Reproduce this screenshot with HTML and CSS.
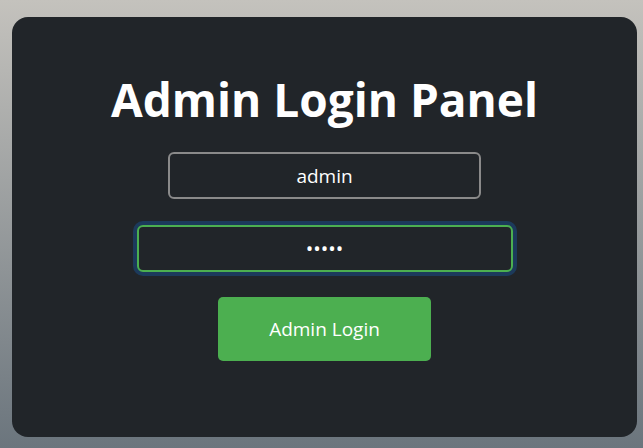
FILE: index.html
```html
<!DOCTYPE html>
<html>
<head>
<meta charset="utf-8">
<link rel="stylesheet" href="styles.css">
</head>
<body>
<div class="card">
  <h1 class="title">Admin Login Panel</h1>
  <input class="field field-user" type="text" value="admin">
  <input class="field field-pass" type="password" value="admin">
  <button class="btn">Admin Login</button>
</div>
</body>
</html>
```
FILE: styles.css
```css
html, body {
  margin: 0;
  height: 100%;
}
body {
  background: linear-gradient(to bottom, #c4c2bd 0%, #6b757d 100%);
  font-family: "Open Sans", "Noto Sans", sans-serif;
  padding: 17px 0 0 12px;
  box-sizing: border-box;
}
.card {
  width: 625px;
  height: 420px;
  background: #212529;
  border-radius: 16px;
  display: flex;
  flex-direction: column;
  align-items: center;
  padding-top: 54px;
  box-sizing: border-box;
}
.title {
  margin: 0 0 25px;
  color: #fff;
  font-size: 46px;
  line-height: 56px;
  font-weight: 700;
}
.field {
  box-sizing: border-box;
  height: 47px;
  background: #212529;
  color: #fff;
  text-align: center;
  font-family: "Open Sans", "Noto Sans", sans-serif;
  font-size: 19px;
  border-radius: 6px;
  outline: none;
  padding: 0 10px;
}
.field-user {
  width: 313px;
  border: 2px solid #8a8a8a;
}
.field-pass {
  width: 376px;
  margin-top: 26px;
  border: 2px solid #4caf50;
  box-shadow: 0 0 0 4px #1c3a5b;
  font-size: 20px;
}
.btn {
  margin-top: 25px;
  width: 213px;
  height: 64px;
  background: #4caf50;
  color: #fff;
  border: none;
  border-radius: 5px;
  font-family: "Open Sans", "Noto Sans", sans-serif;
  font-size: 19px;
}
```
